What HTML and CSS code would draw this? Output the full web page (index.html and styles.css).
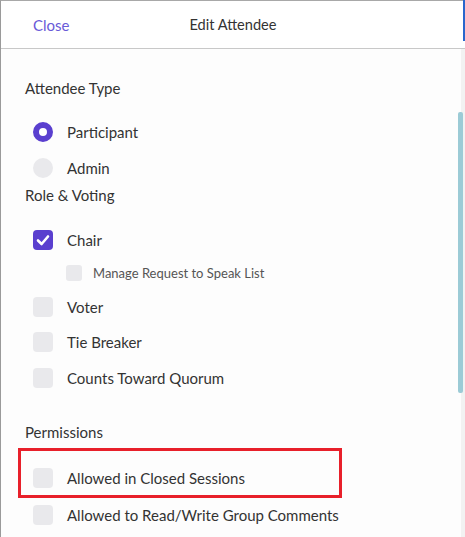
FILE: index.html
```html
<!DOCTYPE html>
<html>
<head>
<meta charset="utf-8">
<link rel="stylesheet" href="styles.css">
</head>
<body>
<div class="panel">
  <header class="header">
    <a class="close">Close</a>
    <div class="title">Edit Attendee</div>
  </header>
  <main class="content">
    <h2 class="section">Attendee Type</h2>
    <div class="opt radio-row"><span class="radio on"></span><span class="lbl">Participant</span></div>
    <div class="opt radio-row"><span class="radio"></span><span class="lbl">Admin</span></div>
    <h2 class="section s2">Role &amp; Voting</h2>
    <div class="opt first"><span class="box on"><svg viewBox="0 0 20 20" width="20" height="20"><path d="M5 10.5 L8.6 14 L15 6.5" fill="none" stroke="#fff" stroke-width="2.6" stroke-linecap="round" stroke-linejoin="round"/></svg></span><span class="lbl">Chair</span></div>
    <div class="opt sub"><span class="box small"></span><span class="lbl">Manage Request to Speak List</span></div>
    <div class="opt role"><span class="box"></span><span class="lbl">Voter</span></div>
    <div class="opt role"><span class="box"></span><span class="lbl">Tie Breaker</span></div>
    <div class="opt role"><span class="box"></span><span class="lbl">Counts Toward Quorum</span></div>
    <h2 class="section s3">Permissions</h2>
    <div class="opt perm"><span class="box"></span><span class="lbl">Allowed in Closed Sessions</span><span class="highlight"></span></div>
    <div class="opt last"><span class="box"></span><span class="lbl">Allowed to Read/Write Group Comments</span></div>
  </main>
  <div class="scroll-top"></div>
  <div class="scroll-track"></div>
  <div class="scroll-thumb"></div>
</div>
</body>
</html>
```
FILE: styles.css
```css
html, body {
  margin: 0;
  padding: 0;
  background: #fff;
}
body {
  font-family: Lato, "Open Sans", sans-serif;
  color: #333;
  width: 465px;
  height: 537px;
  overflow: hidden;
}
.panel {
  position: relative;
  height: 537px;
  border-top: 1px solid #a8a8a8;
  border-left: 1px solid #9a9a9a;
  box-sizing: border-box;
  background: #fdfdfd;
}
.header {
  height: 47px;
  border-bottom: 1px solid #c8c8c8;
  display: flex;
  align-items: center;
  position: relative;
  background: #fff;
}
.close {
  margin-left: 32px;
  color: #6a5ad8;
  font-size: 15px;
}
.title {
  position: absolute;
  left: 0;
  right: 0;
  text-align: center;
  font-size: 14.6px;
  color: #333;
  pointer-events: none;
}
.content {
  padding: 29px 0 0 24px;
}
.section {
  margin: 0;
  font-size: 15px;
  font-weight: normal;
  line-height: 20px;
  color: #333;
}
.s2 { margin-top: -1px; }
.s3 { margin-top: 26px; }
.opt {
  display: flex;
  align-items: center;
  height: 36px;
  position: relative;
  padding-left: 8px;
}
.opt.role { height: 35.5px; }
.section + .radio-row { margin-top: 16px; }
.opt.first { margin-top: 17px; }
.opt.sub { height: 30px; padding-left: 41px; margin-bottom: 1px; }
.opt.perm { margin-top: 18px; }
.opt.last { margin-top: 1px; }
.lbl {
  font-size: 15px;
  margin-left: 14px;
  color: #333;
  white-space: nowrap;
}
.sub .lbl {
  font-size: 13px;
  margin-left: 11px;
  color: #555;
}
.radio {
  width: 20px;
  height: 20px;
  border-radius: 50%;
  background: #e9e9ec;
  box-sizing: border-box;
  flex: none;
}
.radio.on {
  background: #fff;
  border: 6px solid #5a3fcf;
}
.box {
  width: 20px;
  height: 20px;
  border-radius: 4px;
  background: #e9e9ec;
  flex: none;
  display: flex;
}
.box.on {
  background: #5a3fcf;
}
.box.small {
  width: 16px;
  height: 16px;
  border-radius: 3px;
}
.highlight {
  position: absolute;
  left: -7px;
  top: -12px;
  width: 318px;
  height: 44px;
  border: 3px solid #e8202a;
}
.scroll-top {
  position: absolute;
  right: 0;
  top: -1px;
  width: 2px;
  height: 41px;
  background: #2a66cc;
}
.scroll-track {
  position: absolute;
  right: 0;
  top: 48px;
  bottom: 0;
  width: 4px;
  background: #f2f2f2;
}
.scroll-thumb {
  position: absolute;
  right: 2px;
  top: 111px;
  width: 5px;
  height: 281px;
  border-radius: 2px;
  background: #9ccbd6;
}
```
